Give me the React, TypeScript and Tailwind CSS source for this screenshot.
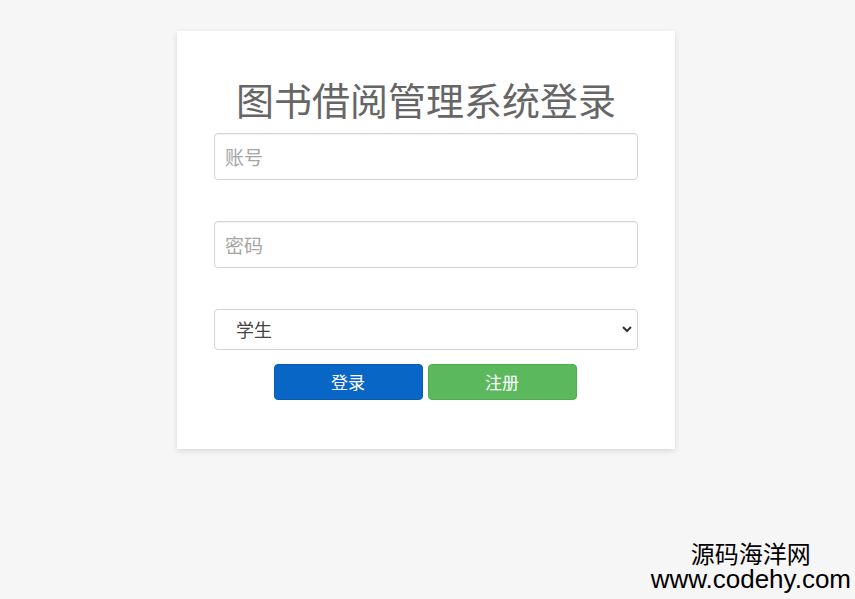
import React, { useState } from 'react';

const cjk = '"Noto Sans CJK SC", "Noto Sans", sans-serif';

export default function App() {
  const [role, setRole] = useState('学生');

  return (
    <div
      className="relative w-full min-h-[599px] bg-[#f6f6f6] overflow-hidden"
      style={{ fontFamily: cjk }}
    >
      <div className="pt-[31px] flex justify-center">
        <div className="ml-[-3px] w-[498px] bg-white shadow-[0_2px_6px_rgba(0,0,0,0.12)] px-[37px] pt-[47px] pb-[49px]">
          <h1 className="text-center text-[38px] leading-[42px] text-[#666] font-normal">
            图书借阅管理系统登录
          </h1>

          <div className="mt-[13px] flex flex-col">
            <input
              type="text"
              placeholder="账号"
              className="h-[47px] w-full rounded-[4px] border border-[#d4d4d4] px-[10px] text-[19px] text-[#555] placeholder:text-[#a5a5a5] shadow-[inset_0_1px_1px_rgba(0,0,0,0.05)] outline-none"
            />
            <input
              type="password"
              placeholder="密码"
              className="mt-[41px] h-[47px] w-full rounded-[4px] border border-[#d4d4d4] px-[10px] text-[19px] text-[#555] placeholder:text-[#a5a5a5] shadow-[inset_0_1px_1px_rgba(0,0,0,0.05)] outline-none"
            />
            <div className="relative mt-[41px]">
              <select
                value={role}
                onChange={(e) => setRole(e.target.value)}
                className="h-[41px] w-full appearance-none rounded-[4px] border border-[#d4d4d4] bg-white pl-[21px] pr-8 text-[18px] text-[#444] outline-none"
              >
                <option>学生</option>
                <option>管理员</option>
              </select>
              <svg
                className="pointer-events-none absolute right-[5px] top-[15px]"
                width="12"
                height="10"
                viewBox="0 0 12 10"
              >
                <path d="M2 3 L6 7 L10 3" fill="none" stroke="#333" strokeWidth="2" />
              </svg>
            </div>

            <div className="mt-[14px] flex justify-center gap-[5px] pr-[2px]">
              <button className="h-[36px] w-[149px] rounded-[4px] bg-[#0866c6] border border-[#0a5cb0] text-white text-[17px]">
                登录
              </button>
              <button className="h-[36px] w-[149px] rounded-[4px] bg-[#5cb85c] border border-[#4cae4c] text-white text-[17px]">
                注册
              </button>
            </div>
          </div>
        </div>
      </div>

      {/* watermark */}
      <div className="absolute right-[4px] bottom-[8px] flex flex-col items-center gap-[2px] text-black">
        <span className="text-[24px] leading-[24px]" style={{ fontFamily: cjk }}>
          源码海洋网
        </span>
        <span
          className="text-[26px] leading-[24px]"
          style={{ fontFamily: '"Liberation Sans", Arial, sans-serif' }}
        >
          www.codehy.com
        </span>
      </div>
    </div>
  );
}
